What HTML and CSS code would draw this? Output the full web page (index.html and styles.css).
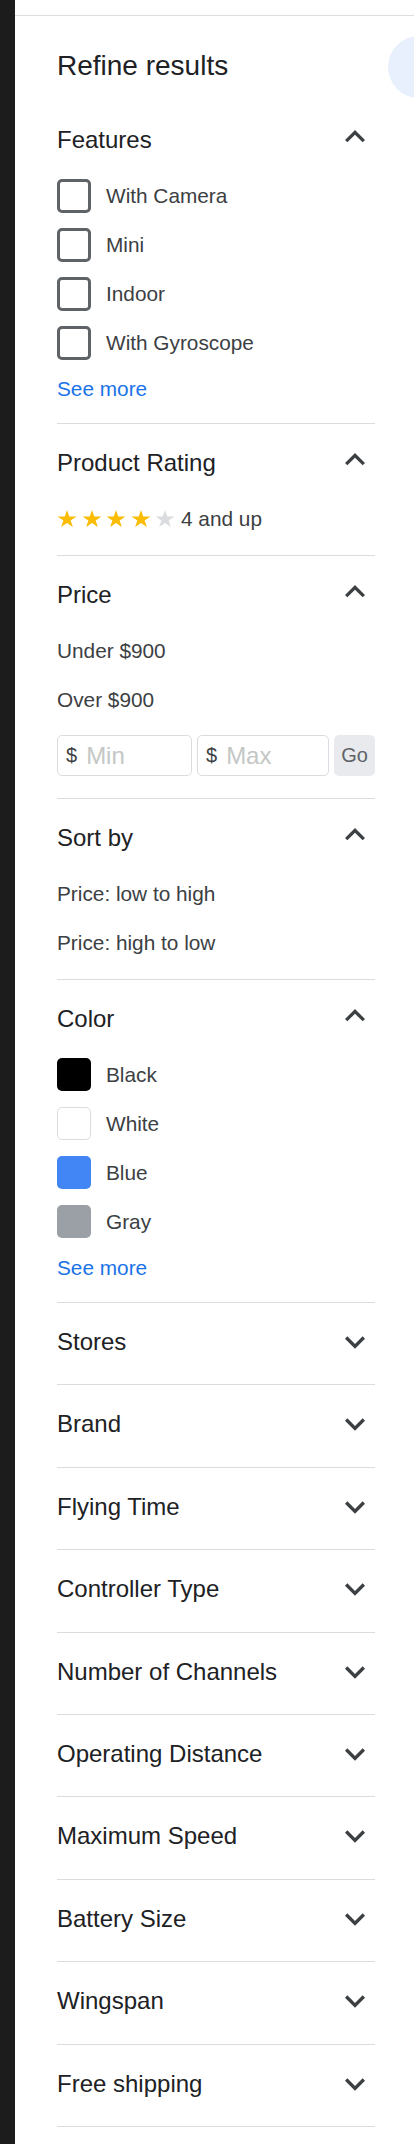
FILE: index.html
```html
<!DOCTYPE html>
<html lang="en">
<head>
<meta charset="utf-8">
<title>Refine results</title>
<link rel="stylesheet" href="styles.css">
</head>
<body>
<div class="strip"></div>
<div class="panel">
  <div class="circle"></div>
  <div class="inner">
    <h1 class="title">Refine results</h1>
    <div class="sections">

      <section class="sec open first">
        <div class="head"><span>Features</span>
          <svg class="chev" viewBox="0 0 24 24"><path d="M12 6l-6 6 1.41 1.41L12 8.83l4.59 4.58L18 12z"/></svg>
        </div>
        <div class="body">
          <div class="row"><span class="cb"></span><span>With Camera</span></div>
          <div class="row"><span class="cb"></span><span>Mini</span></div>
          <div class="row"><span class="cb"></span><span>Indoor</span></div>
          <div class="row"><span class="cb"></span><span>With Gyroscope</span></div>
          <div class="more">See more</div>
        </div>
      </section>

      <section class="sec open">
        <div class="head"><span>Product Rating</span>
          <svg class="chev" viewBox="0 0 24 24"><path d="M12 6l-6 6 1.41 1.41L12 8.83l4.59 4.58L18 12z"/></svg>
        </div>
        <div class="body">
          <div class="row">
            <span class="stars">
              <svg class="star on" viewBox="0 0 20 18.1" preserveAspectRatio="none"><polygon points="10,0 12.25,6.91 19.51,6.91 13.63,11.18 15.88,18.09 10,13.82 4.12,18.09 6.37,11.18 0.49,6.91 7.75,6.91"/></svg>
              <svg class="star on" viewBox="0 0 20 18.1" preserveAspectRatio="none"><polygon points="10,0 12.25,6.91 19.51,6.91 13.63,11.18 15.88,18.09 10,13.82 4.12,18.09 6.37,11.18 0.49,6.91 7.75,6.91"/></svg>
              <svg class="star on" viewBox="0 0 20 18.1" preserveAspectRatio="none"><polygon points="10,0 12.25,6.91 19.51,6.91 13.63,11.18 15.88,18.09 10,13.82 4.12,18.09 6.37,11.18 0.49,6.91 7.75,6.91"/></svg>
              <svg class="star on" viewBox="0 0 20 18.1" preserveAspectRatio="none"><polygon points="10,0 12.25,6.91 19.51,6.91 13.63,11.18 15.88,18.09 10,13.82 4.12,18.09 6.37,11.18 0.49,6.91 7.75,6.91"/></svg>
              <svg class="star off" viewBox="0 0 20 18.1" preserveAspectRatio="none"><polygon points="10,0 12.25,6.91 19.51,6.91 13.63,11.18 15.88,18.09 10,13.82 4.12,18.09 6.37,11.18 0.49,6.91 7.75,6.91"/></svg>
            </span>
            <span class="rating-text">4 and up</span>
          </div>
        </div>
      </section>

      <section class="sec open">
        <div class="head"><span>Price</span>
          <svg class="chev" viewBox="0 0 24 24"><path d="M12 6l-6 6 1.41 1.41L12 8.83l4.59 4.58L18 12z"/></svg>
        </div>
        <div class="body">
          <div class="row">Under $900</div>
          <div class="row">Over $900</div>
          <div class="price-row">
            <label class="field"><span class="cur">$</span><input type="text" placeholder="Min"></label>
            <label class="field"><span class="cur">$</span><input type="text" placeholder="Max"></label>
            <button class="go" type="button">Go</button>
          </div>
        </div>
      </section>

      <section class="sec open">
        <div class="head"><span>Sort by</span>
          <svg class="chev" viewBox="0 0 24 24"><path d="M12 6l-6 6 1.41 1.41L12 8.83l4.59 4.58L18 12z"/></svg>
        </div>
        <div class="body">
          <div class="row">Price: low to high</div>
          <div class="row">Price: high to low</div>
        </div>
      </section>

      <section class="sec open">
        <div class="head"><span>Color</span>
          <svg class="chev" viewBox="0 0 24 24"><path d="M12 6l-6 6 1.41 1.41L12 8.83l4.59 4.58L18 12z"/></svg>
        </div>
        <div class="body">
          <div class="row"><span class="sw black"></span><span>Black</span></div>
          <div class="row"><span class="sw white"></span><span>White</span></div>
          <div class="row"><span class="sw blue"></span><span>Blue</span></div>
          <div class="row"><span class="sw gray"></span><span>Gray</span></div>
          <div class="more">See more</div>
        </div>
      </section>

      <section class="sec closed"><div class="head"><span>Stores</span><svg class="chev" viewBox="0 0 24 24"><path d="M16.59 8.59L12 13.17 7.41 8.59 6 10l6 6 6-6z"/></svg></div></section>
      <section class="sec closed"><div class="head"><span>Brand</span><svg class="chev" viewBox="0 0 24 24"><path d="M16.59 8.59L12 13.17 7.41 8.59 6 10l6 6 6-6z"/></svg></div></section>
      <section class="sec closed"><div class="head"><span>Flying Time</span><svg class="chev" viewBox="0 0 24 24"><path d="M16.59 8.59L12 13.17 7.41 8.59 6 10l6 6 6-6z"/></svg></div></section>
      <section class="sec closed"><div class="head"><span>Controller Type</span><svg class="chev" viewBox="0 0 24 24"><path d="M16.59 8.59L12 13.17 7.41 8.59 6 10l6 6 6-6z"/></svg></div></section>
      <section class="sec closed"><div class="head"><span>Number of Channels</span><svg class="chev" viewBox="0 0 24 24"><path d="M16.59 8.59L12 13.17 7.41 8.59 6 10l6 6 6-6z"/></svg></div></section>
      <section class="sec closed"><div class="head"><span>Operating Distance</span><svg class="chev" viewBox="0 0 24 24"><path d="M16.59 8.59L12 13.17 7.41 8.59 6 10l6 6 6-6z"/></svg></div></section>
      <section class="sec closed"><div class="head"><span>Maximum Speed</span><svg class="chev" viewBox="0 0 24 24"><path d="M16.59 8.59L12 13.17 7.41 8.59 6 10l6 6 6-6z"/></svg></div></section>
      <section class="sec closed"><div class="head"><span>Battery Size</span><svg class="chev" viewBox="0 0 24 24"><path d="M16.59 8.59L12 13.17 7.41 8.59 6 10l6 6 6-6z"/></svg></div></section>
      <section class="sec closed"><div class="head"><span>Wingspan</span><svg class="chev" viewBox="0 0 24 24"><path d="M16.59 8.59L12 13.17 7.41 8.59 6 10l6 6 6-6z"/></svg></div></section>
      <section class="sec closed last"><div class="head"><span>Free shipping</span><svg class="chev" viewBox="0 0 24 24"><path d="M16.59 8.59L12 13.17 7.41 8.59 6 10l6 6 6-6z"/></svg></div></section>

    </div>
  </div>
</div>
</body>
</html>
```
FILE: styles.css
```css
* { box-sizing: border-box; }

html, body {
  margin: 0;
  padding: 0;
  background: #ffffff;
}

body {
  display: flex;
  min-height: 2144px;
  overflow: hidden;
  font-family: "Liberation Sans", Arial, sans-serif;
  color: #202124;
}

.strip {
  width: 15px;
  flex: 0 0 15px;
  background: #1c1c1c;
}

.panel {
  position: relative;
  flex: 1;
  padding-top: 15px;
  overflow: hidden;
}

.circle {
  position: absolute;
  top: 36px;
  left: 373px;
  width: 62px;
  height: 62px;
  border-radius: 50%;
  background: #e8f0fe;
}

.inner {
  border-top: 1px solid #dedede;
  padding: 0 39px 0 42px;
}

.title {
  margin: 0;
  padding: 33px 0 18px;
  font-size: 28px;
  line-height: 34px;
  font-weight: 400;
  color: #202124;
}

.sec {
  border-top: 1px solid #dadce0;
}

.sec.first {
  border-top: none;
}

.sec.last {
  border-bottom: 1px solid #dadce0;
}

.sec.closed {
  padding-bottom: 3.4px;
}

.head {
  height: 78px;
  display: flex;
  align-items: center;
  justify-content: space-between;
  font-size: 24px;
  line-height: 28px;
  color: #202124;
}

.chev {
  width: 40px;
  height: 40px;
  fill: #3c4043;
  flex: 0 0 40px;
}

.body {
  display: flex;
  flex-direction: column;
  gap: 16px;
  padding-bottom: 20px;
}

.row {
  height: 33px;
  display: flex;
  align-items: center;
  gap: 15px;
  font-size: 20.8px;
  color: #3c4043;
}

.cb {
  width: 34px;
  height: 34px;
  flex: 0 0 34px;
  border: 3px solid #5f6368;
  border-radius: 5px;
}

.sw {
  width: 34px;
  height: 33px;
  flex: 0 0 34px;
  border-radius: 5px;
}

.sw.black { background: #000000; }
.sw.white { background: #ffffff; border: 1px solid #dadce0; }
.sw.blue { background: #4285f4; }
.sw.gray { background: #9aa0a6; }

.more {
  height: 28px;
  display: flex;
  align-items: center;
  font-size: 20.8px;
  color: #1a73e8;
}

.stars {
  display: flex;
  gap: 4.5px;
  margin-right: -9px;
}

.star {
  width: 20px;
  height: 17px;
}

.star.on { fill: #fbbc04; }
.star.off { fill: #dadce0; }

.rating-text {
  font-size: 20.8px;
}

.price-row {
  display: flex;
  gap: 5px;
  height: 41px;
  margin-top: 3px;
  margin-bottom: 2px;
}

.field {
  flex: 0 0 135px;
  display: flex;
  align-items: center;
  gap: 9px;
  border: 1px solid #dadce0;
  border-radius: 5px;
  padding: 0 8px;
}

.field:nth-child(2) {
  flex-basis: 132px;
}

.cur {
  font-size: 20px;
  color: #3c4043;
}

.field input {
  width: 100%;
  min-width: 0;
  border: none;
  outline: none;
  padding: 0;
  background: transparent;
  font-family: "Liberation Sans", Arial, sans-serif;
  font-size: 24px;
  color: #3c4043;
}

.field input::placeholder {
  color: #c4c7c5;
}

.go {
  flex: 0 0 41px;
  height: 41px;
  border: none;
  border-radius: 5px;
  background: #e8eaed;
  font-family: "Liberation Sans", Arial, sans-serif;
  font-size: 20px;
  color: #5f6368;
  padding: 0;
}
```
